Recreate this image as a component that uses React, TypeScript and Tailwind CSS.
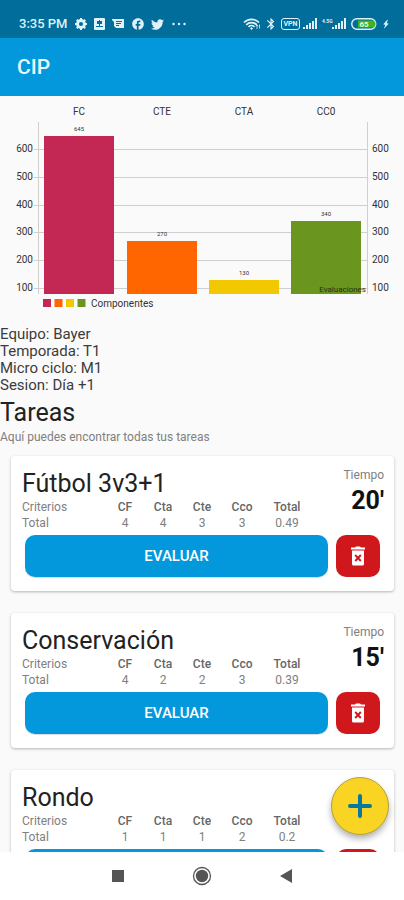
import { MdBluetooth, MdFacebook, MdBolt } from "react-icons/md";
import { FaTwitter } from "react-icons/fa";

const bars = [
  { name: "FC", value: 645, x: 44, color: "#c22853" },
  { name: "CTE", value: 270, x: 127, color: "#ff6600" },
  { name: "CTA", value: 130, x: 209, color: "#f2c800" },
  { name: "CC0", value: 340, x: 291, color: "#6a961f" },
];

const ticks = [600, 500, 400, 300, 200, 100];
const BASE = 198;

function yOf(value: number) {
  return Math.round(192 - (value - 100) * 0.278);
}

const info = ["Equipo: Bayer", "Temporada: T1", "Micro ciclo: M1", "Sesion: Día +1"];

type Task = { title: string; minutes?: number; totals: string[] };

const tasks: Task[] = [
  { title: "Fútbol 3v3+1", minutes: 20, totals: ["4", "4", "3", "3", "0.49"] },
  { title: "Conservación", minutes: 15, totals: ["4", "2", "2", "3", "0.39"] },
  { title: "Rondo", totals: ["1", "1", "1", "2", "0.2"] },
];

const criteria = ["CF", "Cta", "Cte", "Cco", "Total"];

function Gear() {
  return (
    <svg viewBox="0 0 14 14" className="size-[14px]" fill="none" stroke="currentColor" aria-hidden="true">
      <circle cx="7" cy="7" r="3.500" strokeWidth="2.900" />
      <path
        d="M7 1v2M7 11v2M1 7h2M11 7h2M2.800 2.800l1.400 1.400M9.800 9.800l1.400 1.400M11.200 2.800 9.800 4.200M4.200 9.800l-1.400 1.400"
        strokeWidth="2"
      />
    </svg>
  );
}

function Trash() {
  return (
    <svg viewBox="0 0 16 20" className="h-5 w-4" aria-hidden="true">
      <path d="M1 1.500h4L6 .5h4l1 1h4v2H1z" fill="currentColor" />
      <path d="M2 4.500h12v13.500a1.500 1.500 0 0 1-1.500 1.500h-9A1.500 1.500 0 0 1 2 18z" fill="currentColor" />
      <path d="M5.200 9l5.600 6M10.800 9l-5.600 6" stroke="#d0171b" strokeWidth="1.900" />
    </svg>
  );
}

function Signal() {
  return (
    <svg viewBox="0 0 16 12" className="h-3 w-4" fill="currentColor" aria-hidden="true">
      <rect x="0" y="9" width="2" height="2" />
      <rect x="3" y="7" width="2" height="4" />
      <rect x="6" y="5" width="2" height="6" />
      <rect x="9" y="3" width="2" height="8" />
      <rect x="12" y="0" width="2" height="11" />
    </svg>
  );
}

function StatusBar() {
  return (
    <div className="flex h-[38px] shrink-0 items-center justify-between bg-[#006d9b] pt-[10px] pr-3 pl-[19px] text-[#dff2fa]">
      <div className="flex items-center gap-[6px]">
        <span className="text-[13px] leading-4 font-medium">3:35 PM</span>
        <Gear />
        <svg viewBox="0 0 11 12" className="h-3 w-[11px]" aria-hidden="true">
          <rect width="11" height="12" rx="1" fill="currentColor" />
          <path d="M3 3h5v3H3zM2 8h7v1H2z" fill="#006d9b" />
          <path d="M5 2h1v6H5z" fill="#006d9b" />
        </svg>
        <svg viewBox="0 0 13 12" className="ml-[1px] h-3 w-[13px]" aria-hidden="true">
          <path d="M0 1h12v9H4l-2-2V4L0 2z" fill="currentColor" />
          <path d="M4 3.5h6M4 5.5h5M4 7.5h3" stroke="#006d9b" />
        </svg>
        <MdFacebook size={14} aria-hidden="true" />
        <FaTwitter size={13} aria-hidden="true" />
        <svg viewBox="0 0 14 4" className="ml-[2px] h-1 w-[14px]" fill="currentColor" aria-hidden="true">
          <circle cx="1.500" cy="2" r="1.200" />
          <circle cx="7" cy="2" r="1.200" />
          <circle cx="12.500" cy="2" r="1.200" />
        </svg>
      </div>
      <div className="flex items-center gap-[3px]">
        <svg viewBox="0 0 18 12" className="h-3 w-[18px]" fill="none" stroke="currentColor" aria-hidden="true">
          <path d="M1 4.500C5 .2 12 .2 16 4.500" strokeWidth="1.800" />
          <path d="M3.200 6.800c3-3 7.600-3 10.600 0" strokeWidth="1.700" />
          <path d="M5.500 8.800c2-1.700 4-1.700 6 0" strokeWidth="1.600" />
          <circle cx="8.500" cy="10.500" r=".8" fill="currentColor" />
          <path d="M14 11V7M12.800 8.200 14 7l1.200 1.200M16.500 6.500v4" strokeWidth=".8" />
        </svg>
        <MdBluetooth size={14} aria-hidden="true" />
        <span className="flex h-3 w-[19px] items-center justify-center rounded-[3px] border border-current text-[7px] leading-none font-bold">
          VPN
        </span>
        <Signal />
        <span className="flex w-[26px] items-start">
          <span className="w-[10px] text-[5px] leading-[6px] font-bold">4.5G</span>
          <Signal />
        </span>
        <svg viewBox="0 0 26 12" className="h-3 w-[26px]" aria-hidden="true">
          <rect x=".75" y=".75" width="24" height="10.500" rx="5.200" fill="none" stroke="currentColor" strokeWidth="1.400" />
          <path d="M7 2.500h14a3.500 3.500 0 0 1 0 7H7z" fill="#3fb524" />
          <text x="13" y="9" textAnchor="middle" fontSize="8" fontWeight="700" fill="#e9fbdc">
            65
          </text>
        </svg>
        <MdBolt size={12} className="rotate-12" aria-hidden="true" />
      </div>
    </div>
  );
}

function Chart() {
  return (
    <svg viewBox="0 0 404 230" className="block w-full" role="img" aria-label="Componentes">
      <g stroke="#cfcfcf" strokeWidth="1">
        {ticks.map((t) => (
          <line key={t} x1="34" x2="368" y1={yOf(t) + 0.5} y2={yOf(t) + 0.5} />
        ))}
        <line x1="38.500" x2="38.500" y1="26" y2={BASE} />
        <line x1="367.500" x2="367.500" y1="26" y2={BASE} />
      </g>
      <g fill="#333333" fontSize="10">
        {ticks.map((t) => (
          <g key={t}>
            <text x="33" y={yOf(t) + 3} textAnchor="end">
              {t}
            </text>
            <text x="372" y={yOf(t) + 3}>
              {t}
            </text>
          </g>
        ))}
      </g>
      {bars.map((b) => (
        <g key={b.name} textAnchor="middle" fill="#333333">
          <rect x={b.x} y={yOf(b.value)} width="70" height={BASE - yOf(b.value)} fill={b.color} />
          <text x={b.x + 35} y="19" fontSize="10">
            {b.name}
          </text>
          <text x={b.x + 35} y={yOf(b.value) - 5} fontSize="6">
            {b.value}
          </text>
        </g>
      ))}
      <text x="366" y="196" textAnchor="end" fontSize="8" fill="#26330f">
        Evaluaciones
      </text>
      {bars.map((b, i) => (
        <rect key={b.name} x={43 + i * 11.5} y="203" width="8" height="8" fill={b.color} />
      ))}
      <text x="91" y="211" fontSize="10" fill="#333333">
        Componentes
      </text>
    </svg>
  );
}

function TaskCard({ task }: { task: Task }) {
  return (
    <article className="rounded-[4px] bg-white pt-3 pr-[10px] pb-[14px] pl-[11px] shadow-[0_1px_3px_rgba(0,0,0,0.28)]">
      <div className="flex justify-between">
        <div>
          <h3 className="text-[25px] leading-[31px] text-[#222222]">{task.title}</h3>
          <table className="table-fixed border-collapse text-center text-[12px] leading-4 text-[#808080]">
            <colgroup>
              <col className="w-[84px]" />
              <col className="w-[38px]" />
              <col className="w-[38px]" />
              <col className="w-[40px]" />
              <col className="w-[40px]" />
              <col className="w-[50px]" />
            </colgroup>
            <thead>
              <tr>
                <th scope="col" className="p-0 text-left font-normal">Criterios</th>
                {criteria.map((c) => (
                  <th key={c} scope="col" className="p-0 font-medium text-[#666666]">{c}</th>
                ))}
              </tr>
            </thead>
            <tbody>
              <tr>
                <th scope="row" className="p-0 text-left font-normal">Total</th>
                {task.totals.map((v, i) => (
                  <td key={criteria[i]} className="p-0">{v}</td>
                ))}
              </tr>
            </tbody>
          </table>
        </div>
        {task.minutes !== undefined && (
          <div className="text-right">
            <p className="text-[12px] leading-[14px] text-[#808080]">Tiempo</p>
            <p className="mt-1 text-[25px] leading-[30px] font-bold text-[#111111]">{task.minutes}'</p>
          </div>
        )}
      </div>
      <div className="mt-1 mr-1 ml-[3px] flex gap-2">
        <button type="button" className="h-[42px] flex-1 rounded-[10px] bg-[#0398dc] text-[15px] font-medium text-white shadow-[0_1px_1px_rgba(0,0,0,0.15)]">
          EVALUAR
        </button>
        <button type="button" aria-label="Eliminar" className="flex h-[42px] w-11 items-center justify-center rounded-[10px] bg-[#d0171b] text-white">
          <Trash />
        </button>
      </div>
    </article>
  );
}

export default function App() {
  return (
    <div className="flex h-screen flex-col overflow-hidden bg-[#fafafa] font-[Roboto,sans-serif]">
      <StatusBar />
      <header className="flex h-[58px] shrink-0 items-center bg-[#0398dc] px-[17px]">
        <h1 className="text-[21px] leading-6 font-medium text-[#eef9ff]">CIP</h1>
      </header>
      <div className="relative min-h-0 flex-1">
        <main className="h-full overflow-x-hidden overflow-y-auto [scrollbar-width:none]">
          <Chart />
          <div className="text-[15px] leading-[17px] text-[#3c3c3c]">
            {info.map((line) => (
              <p key={line}>{line}</p>
            ))}
          </div>
          <h2 className="mt-1 text-[25px] leading-[30px] text-[#222222]">Tareas</h2>
          <p className="mt-[1px] text-[12px] leading-4 text-[#808080]">Aquí puedes encontrar todas tus tareas</p>
          <div className="mt-[11px] flex flex-col gap-[22px] pr-[10px] pl-[11px]">
            {tasks.map((t) => (
              <TaskCard key={t.title} task={t} />
            ))}
          </div>
        </main>
        <button
          type="button"
          aria-label="Agregar tarea"
          className="absolute right-[15px] bottom-[17px] flex size-[58px] items-center justify-center rounded-full border border-[#b5a238] bg-[#f9d423] shadow-[0_4px_6px_rgba(0,0,0,0.3)]"
        >
          <svg viewBox="0 0 24 24" className="size-6" stroke="#08799c" strokeWidth="4" strokeLinecap="round" aria-hidden="true">
            <path d="M12 2v20M2 12h20" />
          </svg>
        </button>
      </div>
      <nav className="flex h-12 shrink-0 items-center justify-center gap-[64px] bg-white text-[#555555]">
        <button type="button" aria-label="Recientes" className="flex w-5 justify-center">
          <span className="size-3 bg-current" />
        </button>
        <button type="button" aria-label="Inicio" className="flex w-5 justify-center">
          <svg viewBox="0 0 20 20" className="size-5" aria-hidden="true">
            <circle cx="10" cy="10" r="8.500" fill="none" stroke="currentColor" strokeWidth="1.300" />
            <circle cx="10" cy="10" r="6.200" fill="currentColor" />
          </svg>
        </button>
        <button type="button" aria-label="Atrás" className="flex w-5 justify-center">
          <svg viewBox="0 0 12 14" className="h-[14px] w-3" fill="currentColor" aria-hidden="true">
            <path d="M12 0v14L0 7z" />
          </svg>
        </button>
      </nav>
    </div>
  );
}
